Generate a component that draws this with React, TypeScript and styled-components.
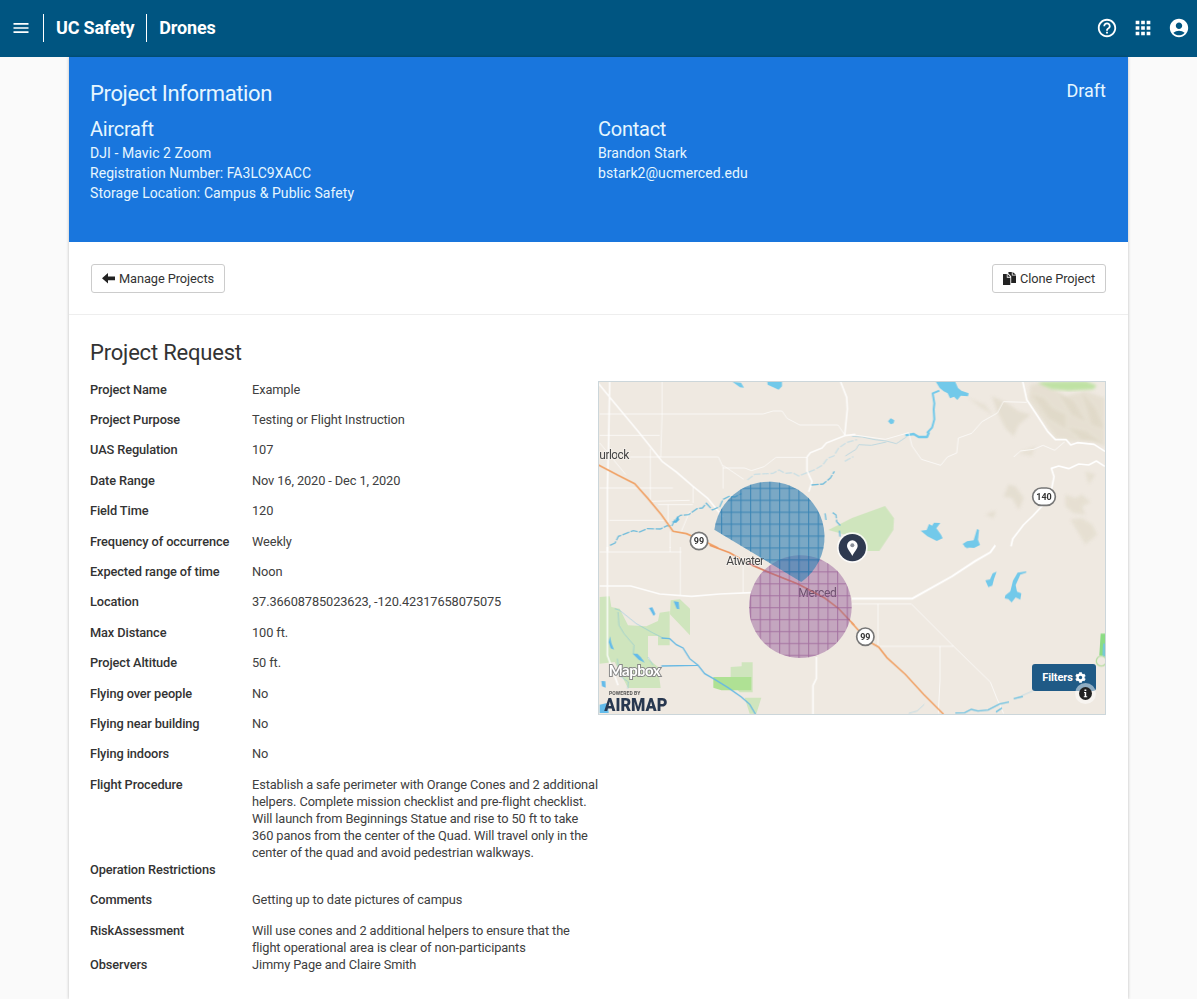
import React from 'react';
import styled, { createGlobalStyle } from 'styled-components';
import { MdMenu, MdHelpOutline, MdApps, MdAccountCircle } from 'react-icons/md';
import { FaCog } from 'react-icons/fa';

const GlobalStyle = createGlobalStyle`
  * { box-sizing: border-box; }
  body { margin: 0; background: #fafafa; color: #333; font: 12.8px/17px Roboto, "Liberation Sans", sans-serif; overflow: hidden; }
  h1, h2, h3, p, dl, dt, dd { margin: 0; font-weight: 400; }
`;

const TopBar = styled.header`
  display: flex;
  align-items: center;
  height: 57px;
  padding: 0 7px 1px 11px;
  background: #005581;
  color: #fff;
`;
const MenuIcon = styled.span`
  display: flex;
  width: 32px;
  font-size: 20px;
`;
const BrandItem = styled.span`
  display: flex;
  align-items: center;
  height: 28px;
  padding: 0 12px 1px;
  border-left: 1px solid #fff;
  font-size: 18px;
  font-weight: 700;
  letter-spacing: -0.18px;
`;
const TopActions = styled.nav`
  display: flex;
  gap: 14px;
  margin-left: auto;
  font-size: 22px;
`;

const Page = styled.main`
  width: 1059px;
  height: 942px;
  margin: 0 auto;
  background: #fff;
  box-shadow: 0 0 3px rgba(0, 0, 0, 0.25);
`;
const Banner = styled.section`
  height: 185px;
  padding: 20px 22px 20px 21px;
  background: #1976dd;
  color: #e6f6ff;
`;
const BannerTop = styled.div`
  display: flex;
  justify-content: space-between;
  height: 40px;
`;
const BannerTitle = styled.h1`
  font-size: 22px;
  line-height: 33px;
  letter-spacing: -0.37px;
`;
const Status = styled.span`
  font-size: 18px;
  line-height: 27px;
`;
const BannerColumns = styled.div`
  display: grid;
  grid-template-columns: 1fr 1fr;
`;
const BannerHeading = styled.h2`
  margin-bottom: 2px;
  font-size: 20px;
  line-height: 24px;
  letter-spacing: -0.25px;
`;
const BannerLine = styled.p`
  font-size: 14px;
  line-height: 20px;
  letter-spacing: 0.07px;
`;

const ActionRow = styled.div`
  display: flex;
  justify-content: space-between;
  height: 73px;
  padding: 22px 22px 0;
  border-bottom: 1px solid #eee;
`;
const ActionButton = styled.button`
  display: flex;
  align-items: center;
  gap: 4px;
  height: 29px;
  padding: 0 10px;
  border: 1px solid #ccc;
  border-radius: 3px;
  background: #fff;
  color: #333;
  font: 12.8px/17px Roboto, sans-serif;
  letter-spacing: -0.08px;
`;

const Request = styled.section`
  padding: 23px 22px 0 21px;
`;
const RequestTitle = styled.h2`
  height: 43px;
  padding-top: 1px;
  font-size: 22px;
  line-height: 28px;
  letter-spacing: -0.2px;
`;
const RequestBody = styled.div`
  display: flex;
  align-items: flex-start;
`;
const Fields = styled.dl`
  width: 508px;
  margin-top: -0.5px;
  letter-spacing: -0.11px;
`;
const Field = styled.div`
  display: flex;
  min-height: 30.42px;
`;
const FieldLabel = styled.dt`
  flex: 0 0 162px;
  font-weight: 500;
`;
const FieldValue = styled.dd`
  flex: 1;
  color: #404040;
  white-space: pre;
`;

const MapFrame = styled.div`
  position: relative;
  width: 508px;
  height: 334px;
  border: 1px solid #ccd6da;
  overflow: hidden;
  svg { display: block; }
`;
const FilterButton = styled.button`
  position: absolute;
  right: 9px;
  bottom: 23px;
  display: flex;
  align-items: center;
  justify-content: center;
  gap: 2px;
  width: 64px;
  height: 27px;
  padding: 0;
  border: 0;
  border-radius: 3px;
  background: #1f5a86;
  color: #fff;
  font: 700 11px/14px Roboto, sans-serif;
  letter-spacing: -0.1px;
`;
const InfoBadge = styled.span`
  position: absolute;
  right: 9px;
  bottom: 10px;
`;

const fields: [string, string][] = [
  ['Project Name', 'Example'],
  ['Project Purpose', 'Testing or Flight Instruction'],
  ['UAS Regulation', '107'],
  ['Date Range', 'Nov 16, 2020 - Dec 1, 2020'],
  ['Field Time', '120'],
  ['Frequency of occurrence', 'Weekly'],
  ['Expected range of time', 'Noon'],
  ['Location', '37.36608785023623, -120.42317658075075'],
  ['Max Distance', '100 ft.'],
  ['Project Altitude', '50 ft.'],
  ['Flying over people', 'No'],
  ['Flying near building', 'No'],
  ['Flying indoors', 'No'],
  ['Flight Procedure', 'Establish a safe perimeter with Orange Cones and 2 additional\nhelpers. Complete mission checklist and pre-flight checklist.\nWill launch from Beginnings Statue and rise to 50 ft to take\n360 panos from the center of the Quad. Will travel only in the\ncenter of the quad and avoid pedestrian walkways.'],
  ['Operation Restrictions', ''],
  ['Comments', 'Getting up to date pictures of campus'],
  ['RiskAssessment', 'Will use cones and 2 additional helpers to ensure that the\nflight operational area is clear of non-participants'],
  ['Observers', 'Jimmy Page and Claire Smith'],
];

const ArrowLeft = () => (
  <svg width="13" height="11" viewBox="0 0 13 11"><path d="M0 5.2 6 0v3.6h7v3.6H6v3.4z" fill="#222" /></svg>
);
const Duplicate = () => (
  <svg width="13" height="13" viewBox="0 0 13 13" fill="#222">
    <path d="M0 2h3.8v3.7h3.5V13H0zM4.5 2 7.3 4.8H4.5z" />
    <path d="M5.4 0h3.4v3.6H13V11H8.2V4.3L5.4 1.4zM9.6 0 13 2.8H9.6z" />
  </svg>
);

/* Terrain, water and roads; each group is one quarter of the map. */
const MapDrawing = () => (
  <svg width="506" height="332" viewBox="3 6 1518 996">
    <defs>
      <pattern id="blueGrid" x="369" y="323" width="29" height="35.8" patternUnits="userSpaceOnUse">
        <path d="M0 2H29M2 0V36" stroke="#2378ae" strokeWidth="3" />
      </pattern>
      <pattern id="plumGrid" x="369" y="323" width="29" height="35.8" patternUnits="userSpaceOnUse">
        <path d="M0 2H29M2 0V36" stroke="#91538f" strokeWidth="3" />
      </pattern>
      <filter id="soft"><feGaussianBlur stdDeviation="4" /></filter>
    </defs>
    <rect width="1530" height="1010" fill="#efe9e1" />

    <g transform="translate(762 -6)">
      <g fill="#d9d2bd" opacity=".65" filter="url(#soft)">
        <path d="M535 20 575 15 640 55 700 40 758 60 758 205 720 190 655 190 610 180 575 130 530 65z" opacity=".6" />
        <path d="M540 50 575 60 600 90 640 110 640 150 590 120zM620 45 665 70 700 130 660 110zM690 45 730 90 755 150 720 140zM650 150 700 160 750 195 690 185z" />
        <path d="M420 55 465 75 500 100 535 110 500 140 485 175 460 150 435 100z" opacity=".7" />
        <path d="M350 60 400 80 420 110 380 85zM500 225 550 205 540 235z" opacity=".5" />
        <path d="M470 320 490 325 515 360 500 395 480 360 455 355zM400 410 430 398 425 420z" opacity=".7" />
        <path d="M640 350 670 360 690 350 715 372 690 385 700 410 665 405 640 385zM655 425 690 420 720 440 735 470 700 500 680 465zM700 280 730 290 710 320z" opacity=".6" />
      </g>
      <path d="M556 15Q585 8 700 10L733 22 725 34 650 38 600 34z" fill="#bfe2a4" filter="url(#soft)" />
      <path d="M-71 456 0 420 99 384 126 421 124 456 82 519H18L-20 470z" fill="#cfe5bd" />
      <g fill="#72c9ea">
        <path d="M252 12h58l8 18 10 8 22 8-2 9-22-2-10 13-10-10-12 5-7-15-12-6-12-10z" />
        <path d="m108 130 8-9 11 6-2 9-9 3zM206 458l18-2 7-18 9 5 6-9 19 1-12 16 14 19 5 11-18 8-28-14-18-15zM332 498l13-8 20-3 10-34 6 3-3 29 6 16-18 9-26-3z" />
      </g>
      <path d="m262 38-20 8 5 30-2 18 2 30-7 25-15 16" fill="none" stroke="#72c9ea" strokeWidth="6" strokeLinejoin="round" />
      <path d="m160 172 25-4 15 9h25l6-14" fill="none" stroke="#72c9ea" strokeWidth="7" strokeLinejoin="round" />
      <path d="m0 175 30 2 38 8 35 4 30 8 30-20M103 192l-45 10-38-2-8 14-32 20" fill="none" stroke="#bfd8df" strokeWidth="3" />
      <g fill="none" stroke="#fff" strokeLinejoin="round">
        <path d="m512 10 12 55 28 42 35 54 23 24h32l14 16 20-7 50 5 34 22M758 265l-25-16-23 12-30-3-30 14-30-8-22 7 8 25-6 30-8 35-50 53-28 27-32 42-5 22" strokeWidth="5" />
        <path d="m0 170 100 14 70-20 10 40 28 40 58 18 20-25 28-12 5-45 40-14 31-35 46-26 18-34 70 2M485 237l20-18 40-5 28-12 35 15 30-26" strokeWidth="3" opacity=".7" />
      </g>
    </g>

    <g transform="translate(0 -6)">
      <g fill="none" stroke="#fff" strokeLinejoin="round">
        <path d="M0 15 45 70 120 160 192 250 235 282 285 325 330 362 375 418M35 12 32 180 28 330 28 520M627 237l10-13 35-14 13-15 55-22 8-80-2-35-18-46M740 173l32-4M627 237v42l15 32-10 30" strokeWidth="5" opacity=".85" />
        <path d="M5 108h490l30-9h27l15 22 38 20h115l20 30M192 12v100l-4 125M5 172h180M96 237h265l14 30v65M375 270h65l20 8 38-12 36-28h92M375 262l62 42M157 212v160M5 330h220M285 325v50M160 370l115-3M180 380h105M34 427h170M210 380v52M5 195l78 95M250 460l25-60M216 460v50" strokeWidth="3" opacity=".65" />
      </g>
      <g fill="none" stroke="#72bddb" strokeWidth="4" strokeDasharray="22 4">
        <path d="m36 502 15-7 10-20 45-17 18 4 23-10 40 1 20-10 14 2 10-20 16-13 25-2 25-18 16-2 12-14 18 20 22-10 10-22 18-9 17 2 20-10" />
        <path d="m640 321 35-3 22-18 12-20M681 406l3 20M704 404l10 7 2 20 12 13M724 458l2 18" />
      </g>
      <path d="m448 306 22-17 55-3 18-10 18 10 23-2 18 10 50-20 22-13 15-20 18-7 15-24 25-17 30-8M740 250l26-14" fill="none" stroke="#cbdfe4" strokeWidth="4" strokeDasharray="20 5" />
      <path d="m404 12 25 2 9 15-12-1zM508 12h44v13l-10 10-18-8-15-7z" fill="#72c9ea" />
      <path d="m220 432 12-4 7-15 5 12-10 10z" fill="#58b5df" />
      <path d="M0 260 60 292 110 317 150 362 190 410 225 460 265 467 330 495 360 510" fill="none" stroke="#f0a368" strokeWidth="5" />
    </g>

    <g transform="translate(0 501)">
      <path d="M5 150 35 148 40 180 65 185 90 235 145 238 180 222 185 197 215 193 215 295H180V267H150V335L180 360 188 423H90L50 345 5 350zM218 160l28-3 30 28v80l-60-63zM398 360l33-2v-12h33v90H425L398 405zM440 452h50l-15 48h-20z" fill="#cfe5bd" />
      <path d="M346 390h114v40h-90l-24-8z" fill="#afe194" />
      <g fill="none" stroke="#fff" strokeLinejoin="round">
        <path d="M28 0V325L60 415M5 117H98L185 141 280 148 365 141 460 137M655 330V395l-10 20v90" strokeWidth="5" opacity=".85" />
        <path d="M247 0v145M5 15h245M435 50v87M216 0v15" strokeWidth="3" opacity=".65" />
      </g>
      <g fill="none" stroke="#67b9e3" strokeWidth="4">
        <path d="m190 273 25 2 20 18 20 10 20 32 25 20 20 25 30 17 40 25 40 28 25 22 17 29M190 357l108-2" />
        <path d="m50 185 15 5 50 40 50 28 30 15M60 195l3 40 15 25 30 35-2 25 30 20M58 335l5 50 28 20-2 20M150 330l15 25" strokeWidth="3" opacity=".4" />
      </g>
      <path d="m153 183 10-2 9 20-5 6zM227 163l15 2 2 22-8-2zM36 268l4 20 8 20-10-4-6-18zM104 320h14l10 10 12 17-18-9zM10 402l12 1 1 19-11-4zM5 473l22-5 5 30H5z" fill="#63bbea" />
      <path d="m335-5 60 22 60 35 60 25 85 34 80 42 40 30 48 51" fill="none" stroke="#ef9860" strokeWidth="5" />
    </g>

    <g transform="translate(762 501)">
      <g fill="none" stroke="#fff" strokeLinejoin="round">
        <path d="M0 155H180L300 88 370 42 415 16 430-5" strokeWidth="6" />
        <path d="M0 171H178L305 298 415 405 435 455 455 500M78 171V298H305M264 298V400l-5 98" strokeWidth="3" opacity=".7" />
      </g>
      <path d="M-2 226 48 282 80 300 105 332 160 382 215 442 275 502" fill="none" stroke="#f0a368" strokeWidth="5" />
      <path d="m310 498 28-1 20-10 20 5 30-3 35-18 28-6M485 455l28-7M432 495l18-12" fill="none" stroke="#6bc1e2" strokeWidth="4" />
      <path d="m510 446 32-14M170 499l25-7 22-20" fill="none" stroke="#c5dce3" strokeWidth="3" />
      <path d="m400 100 14-3 8-18 12-5-8 22-5 20-12 4zM335-3h30L345 3zM460 145l15-12 8-32 14-24 26-4v4l-18 6-9 20-5 11 4 20 13 5-3 19-14-7-12 15-10-10-11-2z" fill="#72c9ea" />
      <path d="M746 260h14v65h-18z" fill="#8bdc84" />
      <path d="M753 290h8v38h-10z" fill="#78c9d5" />
      <circle cx="748" cy="342" r="15" fill="none" stroke="#b6dda2" strokeWidth="4" />
    </g>

    <g fontFamily="Roboto, sans-serif" fontSize="36" fill="#454545" stroke="#f5f1ec" strokeWidth="5" paintOrder="stroke">
      <text x="4" y="238" textLength="90">urlock</text>
      <text x="385" y="555" textLength="113">Atwater</text>
      <text x="601" y="652" textLength="115" stroke="none">Merced</text>
    </g>
    <circle cx="607" cy="680" r="154" fill="#945b98" fillOpacity=".47" />
    <circle cx="607" cy="680" r="154" fill="url(#plumGrid)" opacity=".65" />
    <path d="M349 449A166 166 0 1 1 610 606Z" fill="#327fb3" fillOpacity=".62" />
    <path d="M349 449A166 166 0 1 1 610 606Z" fill="url(#blueGrid)" opacity=".75" />
    <path d="M452 550 515 578 600 612 680 654" fill="none" stroke="#c36c78" strokeWidth="4" opacity=".55" />

    <g fontFamily="Roboto, sans-serif" fontWeight="700" fontSize="27" textAnchor="middle" fill="#333">
      <circle cx="303" cy="483" r="26" fill="#fff" stroke="#777" strokeWidth="5" /><text x="303" y="493">99</text>
      <circle cx="802" cy="770" r="26" fill="#fff" stroke="#777" strokeWidth="5" /><text x="802" y="780">99</text>
      <rect x="1304" y="324" width="68" height="52" rx="26" fill="#fff" stroke="#777" strokeWidth="5" /><text x="1338" y="359">140</text>
    </g>
    <circle cx="763" cy="503" r="46" fill="#fff" opacity=".8" />
    <circle cx="763" cy="503" r="41" fill="#2f3a50" />
    <path d="M763 528C756 513 747 506 747 497a16 16 0 0 1 32 0c0 9-9 16-16 31z" fill="#fff" />
    <circle cx="763" cy="496" r="6" fill="#8a8f99" />

    <text x="32" y="889" fontFamily="Lato, sans-serif" fontWeight="700" fontSize="45" textLength="156" fill="#fff" stroke="#888" strokeWidth="6" paintOrder="stroke">Mapbox</text>
    <text x="33" y="945" fontFamily="Roboto, sans-serif" fontSize="15" fontWeight="700" textLength="94" fill="#555">POWERED BY</text>
    <text x="19" y="994" fontFamily="Roboto, sans-serif" fontSize="54" fontWeight="900" textLength="189" lengthAdjust="spacingAndGlyphs" fill="#283850">AIRMAP</text>
  </svg>
);

export default function App() {
  return (
    <>
      <GlobalStyle />
      <TopBar>
        <MenuIcon><MdMenu /></MenuIcon>
        <BrandItem>UC Safety</BrandItem>
        <BrandItem>Drones</BrandItem>
        <TopActions><MdHelpOutline /><MdApps /><MdAccountCircle /></TopActions>
      </TopBar>
      <Page>
        <Banner>
          <BannerTop><BannerTitle>Project Information</BannerTitle><Status>Draft</Status></BannerTop>
          <BannerColumns>
            <div>
              <BannerHeading>Aircraft</BannerHeading>
              <BannerLine>DJI - Mavic 2 Zoom</BannerLine>
              <BannerLine>Registration Number: FA3LC9XACC</BannerLine>
              <BannerLine>Storage Location: Campus &amp; Public Safety</BannerLine>
            </div>
            <div>
              <BannerHeading>Contact</BannerHeading>
              <BannerLine>Brandon Stark</BannerLine>
              <BannerLine>bstark2@ucmerced.edu</BannerLine>
            </div>
          </BannerColumns>
        </Banner>
        <ActionRow>
          <ActionButton><ArrowLeft />Manage Projects</ActionButton>
          <ActionButton><Duplicate />Clone Project</ActionButton>
        </ActionRow>
        <Request>
          <RequestTitle>Project Request</RequestTitle>
          <RequestBody>
            <Fields>
              {fields.map(([label, value]) => (
                <Field key={label}><FieldLabel>{label}</FieldLabel><FieldValue>{value}</FieldValue></Field>
              ))}
            </Fields>
            <MapFrame>
              <MapDrawing />
              <FilterButton>Filters <FaCog /></FilterButton>
              <InfoBadge>
                <svg width="21" height="21" viewBox="0 0 21 21">
                  <circle cx="10.5" cy="10.5" r="10.5" fill="#fff" opacity=".5" />
                  <circle cx="10.5" cy="10.5" r="6.5" fill="#222" />
                  <path d="M9 9h2.2v4.2h1v1H8.8v-1h.9V10H9zM9.5 6.4h1.8V8H9.5z" fill="#fff" />
                </svg>
              </InfoBadge>
            </MapFrame>
          </RequestBody>
        </Request>
      </Page>
    </>
  );
}
